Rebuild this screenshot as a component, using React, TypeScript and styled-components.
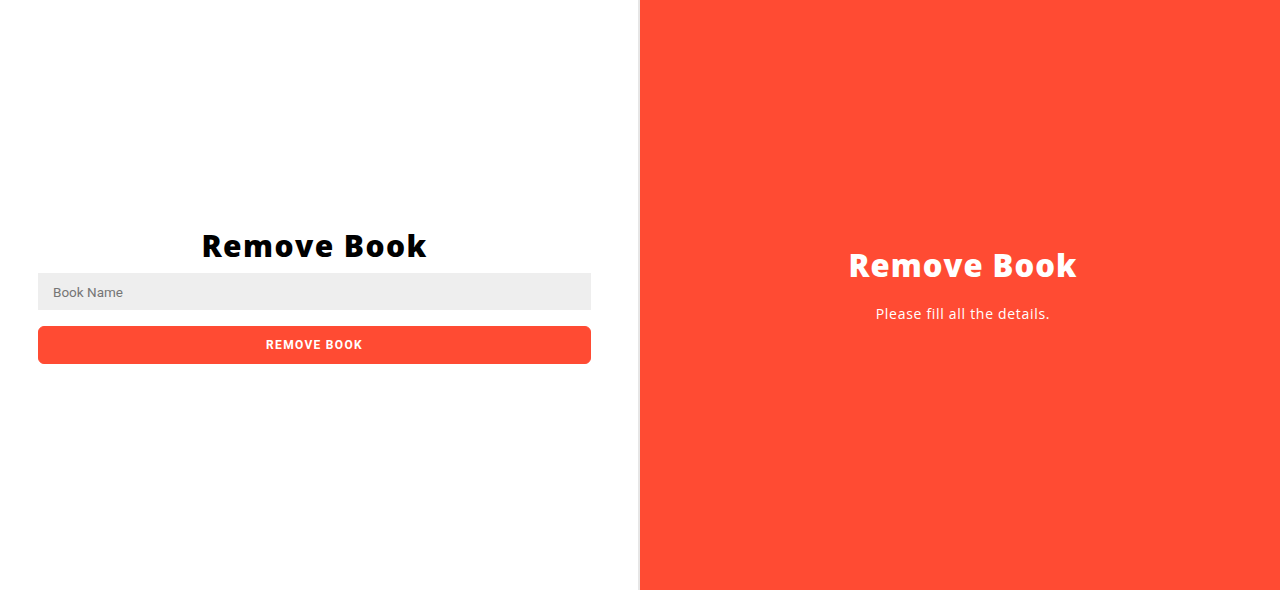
import React from "react";
import styled, { createGlobalStyle } from "styled-components";

const COLOR = {
  ACCENT: "#ff4b33",
  FIELD: "#eeeeee",
};

const GlobalStyle = createGlobalStyle`
  * {
    box-sizing: border-box;
  }

  html,
  body {
    margin: 0;
    padding: 0;
    background: #ffffff;
  }
`;

const Page = styled.div`
  width: 1280px;
  height: 590px;
  display: grid;
  grid-template-columns: 640px 640px;
  overflow: hidden;
`;

const FormPanel = styled.form`
  display: flex;
  flex-direction: column;
  align-items: center;
  justify-content: center;
  padding: 2px 47px 0 38px;
  background: #ffffff;
  border-right: 2px solid #e6e6e6;
`;

const Title = styled.h1<{ light?: boolean }>`
  margin: 0;
  font-family: "Open Sans", "DejaVu Sans", sans-serif;
  font-weight: 800;
  font-size: ${(props) => (props.light ? 31 : 30)}px;
  line-height: 1.2;
  letter-spacing: ${(props) => (props.light ? 1 : 1.4)}px;
  color: ${(props) => (props.light ? "#ffffff" : "#000000")};
`;

const Field = styled.input`
  width: 100%;
  height: 37px;
  margin-top: 9px;
  padding: 0 15px;
  border: none;
  outline: none;
  background: ${COLOR.FIELD};
  font-family: Roboto, sans-serif;
  font-size: 13.5px;
  color: #333333;

  &::placeholder {
    color: #757575;
  }
`;

const SubmitButton = styled.button`
  width: 100%;
  height: 38px;
  margin-top: 16px;
  border: 1px solid ${COLOR.ACCENT};
  border-radius: 6px;
  background: ${COLOR.ACCENT};
  color: #ffffff;
  font-family: Roboto, sans-serif;
  font-size: 12px;
  font-weight: bold;
  letter-spacing: 1.3px;
  text-transform: uppercase;
  cursor: pointer;
`;

const InfoPanel = styled.div`
  display: flex;
  flex-direction: column;
  align-items: center;
  justify-content: center;
  padding: 0 0 20px 6px;
  background: ${COLOR.ACCENT};
`;

const Message = styled.p`
  margin: 20px 0 0;
  font-family: "Open Sans", sans-serif;
  font-size: 14px;
  font-weight: 400;
  letter-spacing: 0.7px;
  color: #ffffff;
`;

export const App = (): JSX.Element => {
  return (
    <>
      <GlobalStyle />
      <Page>
        <FormPanel onSubmit={(e) => e.preventDefault()}>
          <Title>Remove Book</Title>
          <Field type="text" placeholder="Book Name" />
          <SubmitButton type="submit">Remove Book</SubmitButton>
        </FormPanel>
        <InfoPanel>
          <Title light>Remove Book</Title>
          <Message>Please fill all the details.</Message>
        </InfoPanel>
      </Page>
    </>
  );
};

export default App;
